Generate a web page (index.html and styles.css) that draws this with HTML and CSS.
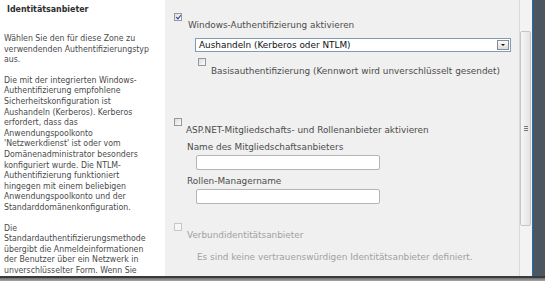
FILE: index.html
```html
<!DOCTYPE html>
<html lang="de">
<head>
<meta charset="utf-8">
<title>Identitätsanbieter</title>
<link rel="stylesheet" href="styles.css">
</head>
<body>
<div class="window">
  <div class="main">
    <div class="desc">
      <div class="title">Identitätsanbieter</div>
      <p>Wählen Sie den für diese Zone zu verwendenden Authentifizierungstyp aus.</p>
      <p>Die mit der integrierten Windows-Authentifizierung empfohlene Sicherheitskonfiguration ist Aushandeln (Kerberos). Kerberos erfordert, dass das Anwendungspoolkonto 'Netzwerkdienst' ist oder vom Domänenadministrator besonders konfiguriert wurde. Die NTLM-Authentifizierung funktioniert hingegen mit einem beliebigen Anwendungspoolkonto und der Standarddomänenkonfiguration.</p>
      <p>Die Standardauthentifizierungsmethode übergibt die Anmeldeinformationen der Benutzer über ein Netzwerk in unverschlüsselter Form. Wenn Sie</p>
    </div>

    <div class="form">
      <div class="row row-win">
        <span class="cb checked"></span>
        <span class="lbl">Windows-Authentifizierung aktivieren</span>
      </div>
      <div class="select">
        <span class="select-text">Aushandeln (Kerberos oder NTLM)</span>
        <span class="select-btn"></span>
      </div>
      <div class="row row-basic">
        <span class="cb"></span>
        <span class="lbl">Basisauthentifizierung (Kennwort wird unverschlüsselt gesendet)</span>
      </div>

      <div class="row row-asp">
        <span class="cb"></span>
        <span class="lbl">ASP.NET-Mitgliedschafts- und Rollenanbieter aktivieren</span>
      </div>
      <div class="field-lbl first">Name des Mitgliedschaftsanbieters</div>
      <div class="input"></div>
      <div class="field-lbl">Rollen-Managername</div>
      <div class="input"></div>

      <div class="row row-fed">
        <span class="cb disabled"></span>
        <span class="lbl muted">Verbundidentitätsanbieter</span>
      </div>
      <div class="note">Es sind keine vertrauenswürdigen Identitätsanbieter definiert.</div>
    </div>

    <div class="scrollbar">
      <div class="thumb"><span class="grip"></span></div>
    </div>
    <div class="edge"></div>
  </div>
  <div class="shadow"></div>
</div>
</body>
</html>
```

FILE: styles.css
```css
html, body {
  margin: 0;
  padding: 0;
  overflow: hidden;
}

body {
  width: 545px;
  height: 281px;
  background: #9a9a9a;
}

.window {
  display: flex;
  flex-direction: column;
  height: 281px;
}

.main {
  display: flex;
  height: 276px;
}

/* left description column */
.desc {
  width: 161px;
  flex: none;
  background: #fff;
  padding-left: 4px;
  font-family: "DejaVu Sans Condensed", "Liberation Sans", sans-serif;
  font-size: 8.7px;
  line-height: 10.6px;
  color: #4a4a4a;
}

.desc .title {
  font-weight: bold;
  color: #2e2e2e;
  padding: 4px 0 0 3px;
  line-height: 10px;
  font-size: 8.8px;
}

.desc p {
  margin: 0;
  width: 149px;
}

.desc .title + p { margin-top: 19px; }
.desc p + p { margin-top: 10px; }

/* right form column */
.form {
  width: 345px;
  flex: none;
  background: #f0f0f0;
  padding: 13px 0 0 9px;
  font-family: "DejaVu Sans", Verdana, sans-serif;
  font-size: 8.9px;
  line-height: 10px;
  color: #4c4c4c;
}

.row {
  display: flex;
  align-items: flex-start;
}

.lbl {
  margin-top: 7px;
  white-space: nowrap;
}

.cb {
  width: 8px;
  height: 8px;
  box-sizing: border-box;
  border: 1px solid #8f9aa3;
  background: linear-gradient(135deg, #dcdcdc, #fdfdfd);
  flex: none;
  position: relative;
}

.cb.checked::after {
  content: "";
  position: absolute;
  left: 2px;
  top: 0px;
  width: 2px;
  height: 4px;
  border: solid #2a3a9a;
  border-width: 0 1.3px 1.3px 0;
  transform: rotate(40deg);
}

.cb.disabled {
  border-color: #c4c8cc;
  background: #f6f6f6;
}

.row-win .lbl { margin-left: 6px; }

.select {
  margin: 8px 0 0 21px;
  width: 316px;
  height: 14px;
  box-sizing: border-box;
  border: 1px solid #7f9db9;
  background: #fff;
  display: flex;
  align-items: center;
  justify-content: space-between;
}

.select-text {
  color: #111;
  padding-left: 3px;
  font-size: 8.9px;
}

.select-btn {
  width: 12px;
  height: 10px;
  box-sizing: border-box;
  margin-right: 1px;
  border: 1px solid #8a8a8a;
  background: linear-gradient(#fbfbfb, #dcdcdc);
  position: relative;
}

.select-btn::after {
  content: "";
  position: absolute;
  left: 3px;
  top: 3px;
  border-left: 2px solid transparent;
  border-right: 2px solid transparent;
  border-top: 2px solid #111;
}

.row-basic {
  margin: 6px 0 0 24px;
}

.row-basic .lbl {
  margin-top: 8px;
  margin-left: 5px;
}

.row-asp {
  margin-top: 42px;
}

.row-asp .lbl { margin-left: 4px; }

.field-lbl {
  margin: 6px 0 0 13px;
}

.field-lbl.first { margin-top: 7px; }

.input {
  margin: 3px 0 0 22px;
  width: 184px;
  height: 15px;
  box-sizing: border-box;
  border: 1px solid #b5b5b5;
  border-radius: 2px;
  background: #fff;
}

.row-fed {
  margin-top: 19px;
}

.row-fed .lbl { margin-left: 5px; }

.muted,
.note {
  color: #a0a0a0;
}

.note {
  margin: 12px 0 0 23px;
  white-space: nowrap;
}

/* scrollbar and window edge */
.scrollbar {
  width: 13px;
  flex: none;
  box-sizing: border-box;
  border-left: 1px solid #dadada;
  background: #f3f3f3;
  padding-top: 31px;
}

.thumb {
  width: 11px;
  height: 195px;
  box-sizing: border-box;
  border: 1px solid #c6c6c6;
  border-radius: 2px;
  background: linear-gradient(90deg, #f6f6f6, #e4e4e4);
  display: flex;
  justify-content: center;
  align-items: center;
}

.grip {
  width: 4px;
  height: 5px;
  background: repeating-linear-gradient(#777 0 1px, transparent 1px 2px);
}

.edge {
  flex: 1;
  border-left: 1px solid #1b6db4;
  background: #4c5661;
}

.shadow {
  height: 5px;
  background: linear-gradient(#3a3a3a 0 2px, #6e6e6e 2px, #a8a8a8);
}
```
